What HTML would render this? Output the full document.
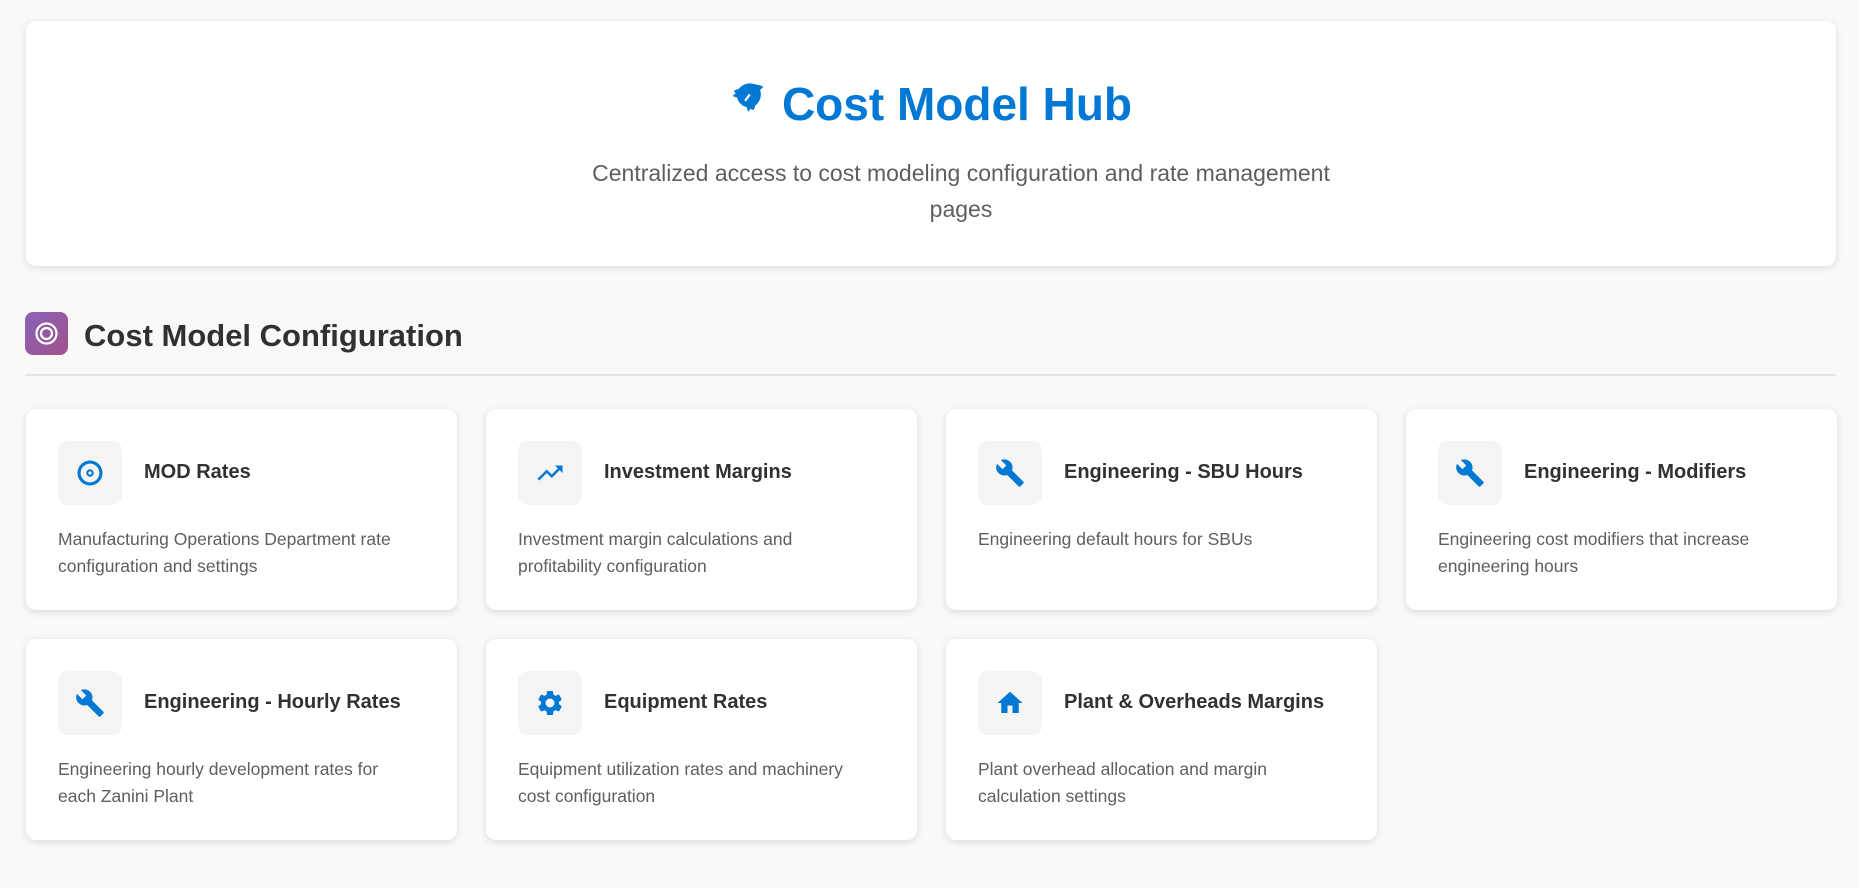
<!DOCTYPE html>
<html><head><meta charset="utf-8"><style>
*{box-sizing:border-box;margin:0;padding:0}
body{width:1859px;height:888px;background:#faf9f8;font-family:"Segoe UI","Liberation Sans",sans-serif;overflow:hidden;position:relative}
.hero{position:absolute;left:26px;top:21px;width:1810px;height:245px;background:#fff;border-radius:10px;box-shadow:0 2px 8px rgba(0,0,0,.12);text-align:center}
.hero h1{position:absolute;left:0;right:0;top:53px;font-size:46px;font-weight:600;color:#0078d4;line-height:60px}
.hero h1 svg{vertical-align:middle;margin-right:14px;position:relative;top:-8px}
.hero p{position:absolute;left:540px;width:790px;top:134px;font-size:23px;line-height:36px;color:#605e5c}
.sec{position:absolute;left:25px;top:312px;width:43px;height:43px;border-radius:8px;background:linear-gradient(135deg,#8764b8,#a4508b)}
.sech{position:absolute;left:84px;top:313px;font-size:31px;font-weight:600;color:#323130;line-height:45px}
.hr{position:absolute;left:25px;top:374px;width:1811px;height:2px;background:#e6e4e2}
.card{position:absolute;width:431px;height:201px;background:#fff;border-radius:10px;box-shadow:0 2px 8px rgba(0,0,0,.13)}
.ib{position:absolute;left:32px;top:32px;width:64px;height:64px;border-radius:10px;background:#f5f4f3;display:flex;align-items:center;justify-content:center}
.ib svg{width:30px;height:30px;fill:#0078d4}
.t{position:absolute;left:118px;top:48px;font-size:20px;font-weight:600;color:#323130;line-height:30px;white-space:nowrap}
.d{position:absolute;left:32px;top:117px;width:340px;font-size:17.5px;line-height:27px;color:#605e5c}
</style></head><body>
<div class="hero"><h1><svg width="38" height="38" viewBox="0 0 24 24" fill="#0078d4"><path d="M20 3l1 1-2 1.5a9 9 0 0 1-3 10l-1 3-2-1-1.5 2-1-3a8 8 0 0 1-6-6l-3-1 2-1.5-1-2 3-1A9 9 0 0 1 15.5 2z"/><path d="M9 12l3-4 1 1-3 4z" fill="#fff"/></svg>Cost Model Hub</h1>
<p>Centralized access to cost modeling configuration and rate management pages</p></div>
<div class="sec"><svg width="43" height="43" viewBox="0 0 43 43"><circle cx="21.5" cy="21.5" r="10" fill="none" stroke="#fff" stroke-width="2.2"/><circle cx="21.5" cy="21.5" r="5.5" fill="none" stroke="#fff" stroke-width="2.2"/></svg></div>
<div class="sech">Cost Model Configuration</div>
<div class="hr"></div>

<div class="card" style="left:26px;top:409px"><div class="ib"><svg viewBox="0 0 24 24"><path d="M12 2a10 10 0 1 0 0 20 10 10 0 0 0 0-20zm0 17.5a7.5 7.5 0 1 1 0-15 7.5 7.5 0 0 1 0 15zM12 9a3 3 0 1 0 0 6 3 3 0 0 0 0-6zm0 4.3a1.3 1.3 0 1 1 0-2.6 1.3 1.3 0 0 1 0 2.6z"/></svg></div><div class="t">MOD Rates</div><div class="d">Manufacturing Operations Department rate configuration and settings</div></div>
<div class="card" style="left:486px;top:409px"><div class="ib"><svg viewBox="0 0 24 24"><path d="M16 6l2.29 2.29-4.88 4.88-4-4L2 16.59 3.41 18l6-6 4 4 6.3-6.29L22 12V6z"/></svg></div><div class="t">Investment Margins</div><div class="d">Investment margin calculations and profitability configuration</div></div>
<div class="card" style="left:946px;top:409px"><div class="ib"><svg viewBox="0 0 24 24"><path d="M22.7 19l-9.1-9.1c.9-2.3.4-5-1.5-6.9-2-2-5-2.4-7.4-1.3L9 6 6 9 1.6 4.7C.4 7.1.9 10.1 2.9 12.1c1.9 1.9 4.6 2.4 6.9 1.5l9.1 9.1c.4.4 1 .4 1.4 0l2.3-2.3c.5-.4.5-1.1.1-1.4z"/></svg></div><div class="t">Engineering - SBU Hours</div><div class="d">Engineering default hours for SBUs</div></div>
<div class="card" style="left:1406px;top:409px"><div class="ib"><svg viewBox="0 0 24 24"><path d="M22.7 19l-9.1-9.1c.9-2.3.4-5-1.5-6.9-2-2-5-2.4-7.4-1.3L9 6 6 9 1.6 4.7C.4 7.1.9 10.1 2.9 12.1c1.9 1.9 4.6 2.4 6.9 1.5l9.1 9.1c.4.4 1 .4 1.4 0l2.3-2.3c.5-.4.5-1.1.1-1.4z"/></svg></div><div class="t">Engineering - Modifiers</div><div class="d">Engineering cost modifiers that increase engineering hours</div></div>
<div class="card" style="left:26px;top:639px"><div class="ib"><svg viewBox="0 0 24 24"><path d="M22.7 19l-9.1-9.1c.9-2.3.4-5-1.5-6.9-2-2-5-2.4-7.4-1.3L9 6 6 9 1.6 4.7C.4 7.1.9 10.1 2.9 12.1c1.9 1.9 4.6 2.4 6.9 1.5l9.1 9.1c.4.4 1 .4 1.4 0l2.3-2.3c.5-.4.5-1.1.1-1.4z"/></svg></div><div class="t">Engineering - Hourly Rates</div><div class="d">Engineering hourly development rates for each Zanini Plant</div></div>
<div class="card" style="left:486px;top:639px"><div class="ib"><svg viewBox="0 0 24 24"><path d="M19.14 12.94c.04-.3.06-.61.06-.94 0-.32-.02-.64-.07-.94l2.03-1.580a.49.49 0 0 0 .12-.61l-1.92-3.32a.49.49 0 0 0-.59-.22l-2.39.96c-.5-.38-1.030-.7-1.62-.94l-.36-2.54a.48.48 0 0 0-.48-.41h-3.84c-.24 0-.43.17-.47.41l-.36 2.54c-.59.24-1.13.57-1.62.94l-2.39-.96a.48.48 0 0 0-.59.22L2.74 8.87c-.12.21-.08.47.12.61l2.03 1.58c-.05.3-.09.63-.09.94s.02.64.07.94l-2.03 1.58a.49.49 0 0 0-.12.61l1.92 3.32c.12.22.37.29.59.22l2.39-.96c.5.38 1.03.7 1.62.94l.36 2.54c.05.24.24.41.48.41h3.84c.24 0 .44-.17.47-.41l.36-2.54c.59-.24 1.13-.56 1.62-.94l2.39.96c.22.08.47 0 .59-.22l1.92-3.32a.47.47 0 0 0-.12-.61l-2.01-1.58zM12 15.6A3.6 3.6 0 1 1 12 8.4a3.6 3.6 0 0 1 0 7.2z"/></svg></div><div class="t">Equipment Rates</div><div class="d">Equipment utilization rates and machinery cost configuration</div></div>
<div class="card" style="left:946px;top:639px"><div class="ib"><svg viewBox="0 0 24 24"><path d="M10 20v-6h4v6h5v-8h3L12 3 2 12h3v8z"/></svg></div><div class="t">Plant &amp; Overheads Margins</div><div class="d">Plant overhead allocation and margin calculation settings</div></div>
</body></html>
